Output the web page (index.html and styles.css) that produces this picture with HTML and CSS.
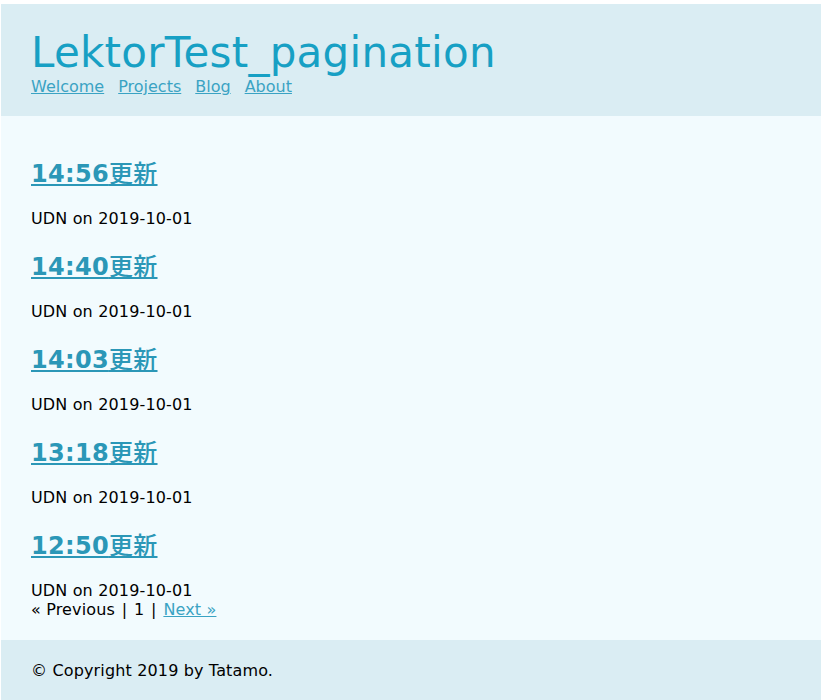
FILE: index.html
```html
<!DOCTYPE html>
<html lang="ja">
<head>
<meta charset="utf-8">
<title>LektorTest_pagination</title>
<link rel="stylesheet" href="styles.css">
</head>
<body>
<header class="site-header">
  <h1 class="site-title">LektorTest_pagination</h1>
  <nav class="site-nav">
    <a href="#">Welcome</a>
    <a href="#">Projects</a>
    <a href="#">Blog</a>
    <a href="#">About</a>
  </nav>
</header>
<div class="page">
  <h2 class="post-title"><a href="#">14:56<span class="cjk">更新</span></a></h2>
  <div class="meta">UDN on 2019-10-01</div>
  <h2 class="post-title"><a href="#">14:40<span class="cjk">更新</span></a></h2>
  <div class="meta">UDN on 2019-10-01</div>
  <h2 class="post-title"><a href="#">14:03<span class="cjk">更新</span></a></h2>
  <div class="meta">UDN on 2019-10-01</div>
  <h2 class="post-title"><a href="#">13:18<span class="cjk">更新</span></a></h2>
  <div class="meta">UDN on 2019-10-01</div>
  <h2 class="post-title"><a href="#">12:50<span class="cjk">更新</span></a></h2>
  <div class="meta">UDN on 2019-10-01</div>
  <div class="pagination">« Previous <span class="sep">|</span> 1 <span class="sep">|</span> <a href="#">Next »</a></div>
</div>
<footer class="site-footer">© Copyright 2019 by Tatamo.</footer>
</body>
</html>
```
FILE: styles.css
```css
html {
  background: #ffffff;
}
body {
  margin: 4px 3px 0 1px;
  font-family: "DejaVu Sans", Verdana, "Noto Sans CJK JP", sans-serif;
  font-size: 16px;
  letter-spacing: 0.15px;
  color: #000;
}
a {
  color: #2b9cbc;
}
.site-header {
  background: #daedf3;
  padding: 24px 30px 20px;
}
.site-title {
  margin: 0;
  font-size: 42px;
  line-height: 49px;
  letter-spacing: 0.25px;
  font-weight: normal;
  color: #17a0c4;
}
.site-nav {
  display: flex;
  gap: 14px;
  line-height: 19px;
  letter-spacing: 0;
}
.site-nav a {
  color: #3aa3c3;
}
.page {
  background: #f2fbfe;
  padding: 19px 30px 21px;
}
.post-title {
  font-size: 24px;
  line-height: 34px;
  font-weight: bold;
  letter-spacing: 0.3px;
  margin: 22px 0 18px;
}
.post-title a {
  color: #2b97b7;
}
.cjk {
  font-weight: 500;
}
.meta {
  line-height: 19px;
}
.pagination {
  line-height: 19px;
}
.pagination .sep {
  padding: 0 1.5px;
}
.pagination a {
  color: #3aa3c3;
}
.site-footer {
  background: #daedf3;
  padding: 21px 30px 30px;
  line-height: 19px;
}
```
